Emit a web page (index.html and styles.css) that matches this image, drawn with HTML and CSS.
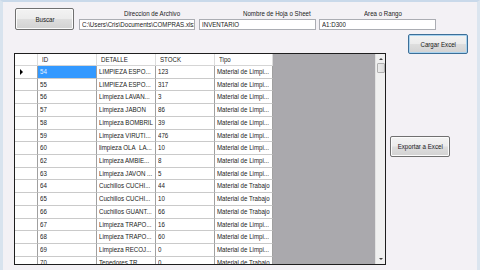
FILE: index.html
```html
<!DOCTYPE html>
<html>
<head>
<meta charset="utf-8">
<link rel="stylesheet" href="styles.css">
</head>
<body>
<div class="window">
  <div class="top">
    <button class="btn buscar"><span class="t tc">Buscar</span></button>
    <div class="field f1"><span class="lbl"><span class="t">Direccion de Archivo</span></span><div class="input"><span class="t">C:\Users\Cris\Documents\COMPRAS.xlsx</span></div></div>
    <div class="field f2"><span class="lbl"><span class="t">Nombre de Hoja o Sheet</span></span><div class="input"><span class="t">INVENTARIO</span></div></div>
    <div class="field f3"><span class="lbl"><span class="t">Area o Rango</span></span><div class="input"><span class="t">A1:D300</span></div></div>
  </div>
  <div class="main">
    <div class="grid">
      <div class="table">
        <div class="row head"><div class="c rh"></div><div class="c cid"><span class="t">ID</span></div><div class="c cdet"><span class="t">DETALLE</span></div><div class="c cst"><span class="t">STOCK</span></div><div class="c ctipo"><span class="t">Tipo</span></div></div>
        <div class="row"><div class="c rh"><span class="cur"></span></div><div class="c cid sel"><span class="t">54</span></div><div class="c cdet"><span class="t">LIMPIEZA ESPO...</span></div><div class="c cst"><span class="t">123</span></div><div class="c ctipo"><span class="t">Material de Limpi...</span></div></div>
        <div class="row"><div class="c rh"></div><div class="c cid"><span class="t">55</span></div><div class="c cdet"><span class="t">LIMPIEZA ESPO...</span></div><div class="c cst"><span class="t">317</span></div><div class="c ctipo"><span class="t">Material de Limpi...</span></div></div>
        <div class="row"><div class="c rh"></div><div class="c cid"><span class="t">56</span></div><div class="c cdet"><span class="t">Limpieza LAVAN...</span></div><div class="c cst"><span class="t">3</span></div><div class="c ctipo"><span class="t">Material de Limpi...</span></div></div>
        <div class="row"><div class="c rh"></div><div class="c cid"><span class="t">57</span></div><div class="c cdet"><span class="t">Limpieza JABON</span></div><div class="c cst"><span class="t">86</span></div><div class="c ctipo"><span class="t">Material de Limpi...</span></div></div>
        <div class="row"><div class="c rh"></div><div class="c cid"><span class="t">58</span></div><div class="c cdet"><span class="t">Limpieza BOMBRIL</span></div><div class="c cst"><span class="t">39</span></div><div class="c ctipo"><span class="t">Material de Limpi...</span></div></div>
        <div class="row"><div class="c rh"></div><div class="c cid"><span class="t">59</span></div><div class="c cdet"><span class="t">Limpieza VIRUTI...</span></div><div class="c cst"><span class="t">476</span></div><div class="c ctipo"><span class="t">Material de Limpi...</span></div></div>
        <div class="row"><div class="c rh"></div><div class="c cid"><span class="t">60</span></div><div class="c cdet"><span class="t">limpieza OLA&nbsp; LA...</span></div><div class="c cst"><span class="t">10</span></div><div class="c ctipo"><span class="t">Material de Limpi...</span></div></div>
        <div class="row"><div class="c rh"></div><div class="c cid"><span class="t">62</span></div><div class="c cdet"><span class="t">Limpieza AMBIE...</span></div><div class="c cst"><span class="t">8</span></div><div class="c ctipo"><span class="t">Material de Limpi...</span></div></div>
        <div class="row"><div class="c rh"></div><div class="c cid"><span class="t">63</span></div><div class="c cdet"><span class="t">Limpieza JAVON ...</span></div><div class="c cst"><span class="t">5</span></div><div class="c ctipo"><span class="t">Material de Limpi...</span></div></div>
        <div class="row"><div class="c rh"></div><div class="c cid"><span class="t">64</span></div><div class="c cdet"><span class="t">Cuchillos CUCHI...</span></div><div class="c cst"><span class="t">44</span></div><div class="c ctipo"><span class="t">Material de Trabajo</span></div></div>
        <div class="row"><div class="c rh"></div><div class="c cid"><span class="t">65</span></div><div class="c cdet"><span class="t">Cuchillos CUCHI...</span></div><div class="c cst"><span class="t">10</span></div><div class="c ctipo"><span class="t">Material de Trabajo</span></div></div>
        <div class="row"><div class="c rh"></div><div class="c cid"><span class="t">66</span></div><div class="c cdet"><span class="t">Cuchillos GUANT...</span></div><div class="c cst"><span class="t">66</span></div><div class="c ctipo"><span class="t">Material de Trabajo</span></div></div>
        <div class="row"><div class="c rh"></div><div class="c cid"><span class="t">67</span></div><div class="c cdet"><span class="t">Limpieza TRAPO...</span></div><div class="c cst"><span class="t">16</span></div><div class="c ctipo"><span class="t">Material de Limpi...</span></div></div>
        <div class="row"><div class="c rh"></div><div class="c cid"><span class="t">68</span></div><div class="c cdet"><span class="t">Limpieza TRAPO...</span></div><div class="c cst"><span class="t">60</span></div><div class="c ctipo"><span class="t">Material de Limpi...</span></div></div>
        <div class="row"><div class="c rh"></div><div class="c cid"><span class="t">69</span></div><div class="c cdet"><span class="t">Limpieza RECOJ...</span></div><div class="c cst"><span class="t">0</span></div><div class="c ctipo"><span class="t">Material de Limpi...</span></div></div>
        <div class="row"><div class="c rh"></div><div class="c cid"><span class="t">70</span></div><div class="c cdet"><span class="t">Tenedores TR...</span></div><div class="c cst"><span class="t">0</span></div><div class="c ctipo"><span class="t">Material de Trabajo</span></div></div>
      </div>
      <div class="scroll">
        <span class="arr up"></span>
        <span class="thumb"></span>
        <span class="track"></span>
        <span class="arr down"></span>
      </div>
    </div>
    <div class="side">
      <button class="btn cargar"><span class="t tc">Cargar Excel</span></button>
      <button class="btn exportar"><span class="t tc">Exportar a Excel</span></button>
    </div>
  </div>
</div>
</body>
</html>
```

FILE: styles.css
```css
* { box-sizing: border-box; margin: 0; padding: 0; }
html, body { width: 480px; height: 270px; overflow: hidden; }
body {
  background: #f3f1f5;
  font-family: "Liberation Sans", Arial, sans-serif;
  font-size: 7.7px;
  color: #1a1a1a;
}
.t {
  display: inline-block;
  white-space: nowrap;
  transform: scaleX(0.8);
  transform-origin: 0 50%;
}
.tc { transform-origin: 50% 50%; }
.window {
  height: 270px;
  border-top: 2px solid #c9d9ea;
  border-left: 3px solid #d8e3ee;
  border-right: 3px solid #dbe5ef;
  display: flex;
  flex-direction: column;
}
.top {
  display: flex;
  align-items: flex-start;
  height: 29px;
  padding-left: 12px;
  padding-top: 6px;
}
.btn {
  font: inherit;
  color: #1a1a1a;
  border: 1px solid #707070;
  border-radius: 2px;
  background: linear-gradient(#f3f3f3 0%, #ececec 48%, #dedede 52%, #d2d2d2 100%);
  box-shadow: inset 0 0 0 1px #fbfbfb;
  text-align: center;
  display: flex;
  align-items: center;
  justify-content: center;
}
.buscar { width: 59px; height: 22px; margin-right: 5px; }
.field { display: flex; flex-direction: column; width: 116px; margin-right: 4px; }
.f2 { width: 117px; margin-right: 3px; }
.f3 { width: 117px; }
.lbl { height: 11px; line-height: 11px; padding-left: 45px; white-space: nowrap; }
.f2 .lbl { padding-left: 44px; }
.input {
  height: 11px;
  border: 1px solid #abadb3;
  background: #fff;
  padding-left: 2px;
  line-height: 9px;
  white-space: nowrap;
  overflow: hidden;
}
.main { display: flex; align-items: flex-start; padding-left: 11px; }
.grid {
  margin-top: 22px;
  width: 372px;
  height: 212px;
  border: 1px solid #1e1e1e;
  display: flex;
  background: #aaa9ad;
}
.table { width: 360px; overflow: hidden; }
.row { display: flex; height: 12.73px; }
.row.head { height: 12px; }
.c {
  background: #fff;
  border-right: 1px solid #a0a0a0;
  border-bottom: 1px solid #cacaca;
  padding-left: 2px;
  line-height: 11px;
  white-space: nowrap;
  overflow: hidden;
}
.head .c { padding-left: 4px; border-bottom-color: #d5d5d5; border-right-color: #dcdcdc; }
.rh { width: 23px; border-right-color: #a0a0a0; position: relative; }
.cid { width: 59px; }
.cdet { width: 59px; }
.cst { width: 59px; }
.ctipo { width: 58px; }
.sel { background: #3399ff; color: #e8f2ff; }
.cur {
  position: absolute;
  left: 5px;
  top: 3px;
  width: 0; height: 0;
  border-top: 3px solid transparent;
  border-bottom: 3px solid transparent;
  border-left: 3px solid #000;
}
.scroll {
  width: 10px;
  background: #f0f0f0;
  border-left: 1px solid #e2e2e2;
  display: flex;
  flex-direction: column;
  align-items: center;
}
.arr { width: 0; height: 0; margin: 4px 0 3px; border-left: 2px solid transparent; border-right: 2px solid transparent; }
.up { border-bottom: 2px solid #404040; }
.down { border-top: 2px solid #404040; margin: 3px 0 4px; }
.thumb { width: 8px; height: 10px; border: 1px solid #b0b0b0; border-radius: 1px; background: linear-gradient(90deg, #ececec, #dcdcdc); }
.track { flex: 1; }
.side { display: flex; flex-direction: column; align-items: flex-start; }
.cargar {
  margin-left: 22px;
  margin-top: 3px;
  width: 60px;
  height: 20px;
  border-color: #3c6f98;
  box-shadow: inset 0 0 0 1px #a9d3ef;
}
.exportar { margin-left: 4px; margin-top: 82px; width: 60px; height: 21px; }
```
